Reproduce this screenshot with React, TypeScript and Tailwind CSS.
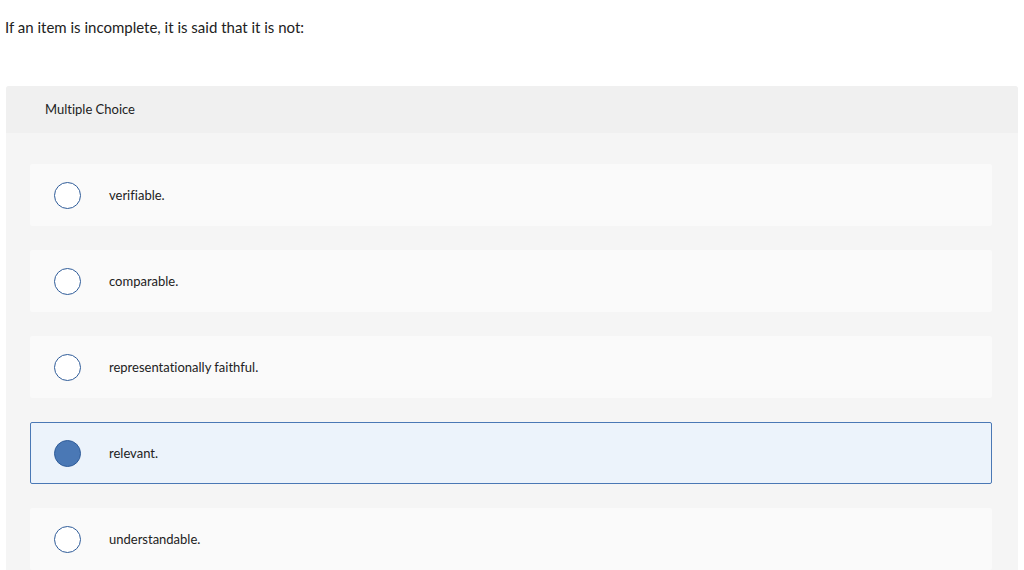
import React from "react";

const options = [
  { label: "verifiable.", selected: false },
  { label: "comparable.", selected: false },
  { label: "representationally faithful.", selected: false },
  { label: "relevant.", selected: true },
  { label: "understandable.", selected: false },
];

export default function App() {
  return (
    <div
      className="w-[1024px] h-[570px] overflow-hidden bg-white text-[#222] [font-variant-ligatures:none]"
      style={{ fontFamily: "Lato, 'Open Sans', sans-serif" }}
    >
      <div className="pl-[5px] pt-[18px] h-[86px] text-[15px] leading-[18px] text-[#222]">
        If an item is incomplete, it is said that it is not:
      </div>
      <div className="ml-[6px] w-[1012px] rounded-t-[3px] bg-[#f5f5f5]">
        <div className="h-[47px] bg-[#f0f0f0] rounded-t-[3px] pl-[39px] flex items-center text-[13px] text-[#222]">
          Multiple Choice
        </div>
        <div className="pt-[31px] pl-[24px] pr-[26px] flex flex-col gap-[24px]">
          {options.map((o) => (
            <div
              key={o.label}
              className={
                o.selected
                  ? "h-[62px] rounded-[2px] border border-[#4a78b5] bg-[#ecf3fb] flex items-center pl-[23px]"
                  : "h-[62px] rounded-[2px] border border-transparent bg-[#fafafa] flex items-center pl-[23px]"
              }
            >
              <div
                className={
                  o.selected
                    ? "w-[27px] h-[27px] rounded-full border border-[#2f5c99] bg-[#4a78b5] shrink-0"
                    : "w-[27px] h-[27px] rounded-full border border-[#2f5c99] bg-white shrink-0"
                }
              />
              <span className="ml-[28px] mt-[2px] text-[13px] text-[#222]">{o.label}</span>
            </div>
          ))}
        </div>
      </div>
    </div>
  );
}
